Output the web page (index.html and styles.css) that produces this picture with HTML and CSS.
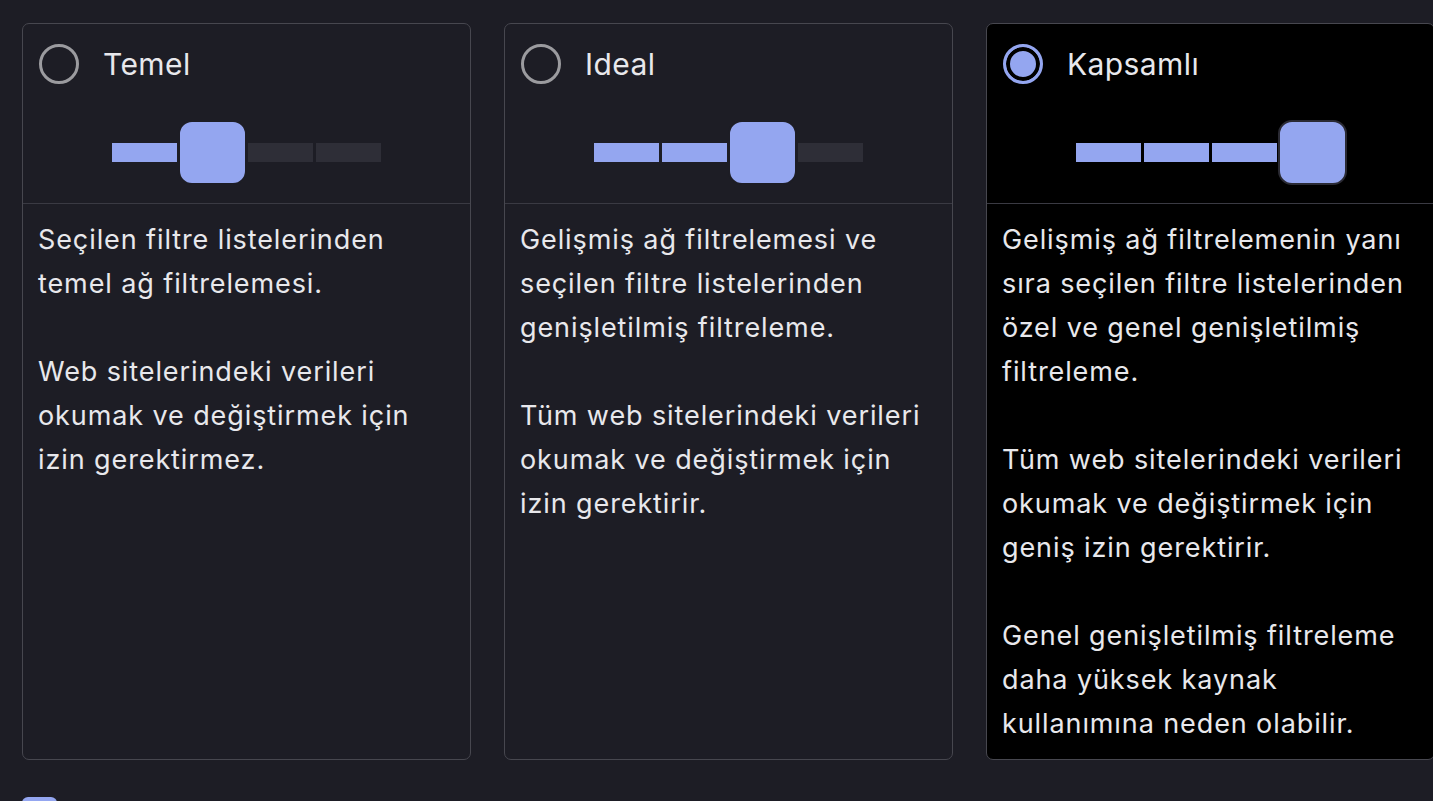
FILE: index.html
```html
<!DOCTYPE html>
<html lang="tr">
<head>
    <meta charset="UTF-8">
    <meta name="viewport" content="width=device-width, initial-scale=1.0">
    <title>Filtreleme modu</title>
    <link rel="stylesheet" href="styles.css">
</head>
<body>
    <main>
        <div class="levels">
            <label class="level">
                <div class="level-head">
                    <div class="level-title"><span class="radio"></span><span>Temel</span></div>
                    <div class="slider">
                        <span class="seg on"></span>
                        <span class="thumb"></span>
                        <span class="seg"></span>
                        <span class="seg"></span>
                    </div>
                </div>
                <div class="level-body">
                    <p>Seçilen filtre listelerinden temel ağ filtrelemesi.</p>
                    <p>Web sitelerindeki verileri okumak ve değiştirmek için izin gerektirmez.</p>
                </div>
            </label>
            <label class="level">
                <div class="level-head">
                    <div class="level-title"><span class="radio"></span><span>Ideal</span></div>
                    <div class="slider">
                        <span class="seg on"></span>
                        <span class="seg on"></span>
                        <span class="thumb"></span>
                        <span class="seg"></span>
                    </div>
                </div>
                <div class="level-body">
                    <p>Gelişmiş ağ filtrelemesi ve seçilen filtre listelerinden genişletilmiş filtreleme.</p>
                    <p>Tüm web sitelerindeki verileri okumak ve değiştirmek için izin gerektirir.</p>
                </div>
            </label>
            <label class="level selected">
                <div class="level-head">
                    <div class="level-title"><span class="radio"></span><span>Kapsamlı</span></div>
                    <div class="slider">
                        <span class="seg on"></span>
                        <span class="seg on"></span>
                        <span class="seg on"></span>
                        <span class="thumb"></span>
                    </div>
                </div>
                <div class="level-body">
                    <p>Gelişmiş ağ filtrelemenin yanı sıra seçilen filtre listelerinden özel ve genel genişletilmiş filtreleme.</p>
                    <p>Tüm web sitelerindeki verileri okumak ve değiştirmek için geniş izin gerektirir.</p>
                    <p>Genel genişletilmiş filtreleme daha yüksek kaynak kullanımına neden olabilir.</p>
                </div>
            </label>
        </div>
        <div class="option"><span class="checkbox"></span></div>
    </main>
</body>
</html>
```

FILE: styles.css
```css
* {
    box-sizing: border-box;
}
html, body {
    margin: 0;
}
body {
    font-family: Inter, "Noto Sans", sans-serif;
    background-color: #1d1d25;
    color: #e8e8ec;
    overflow: hidden;
    height: 801px;
}
main {
    padding: 23px 0 0 22px;
}
.levels {
    display: flex;
    gap: 33px;
    width: 1413px;
}
.level {
    flex: 0 0 449px;
    display: flex;
    flex-direction: column;
    height: 737px;
    border: 1px solid #47474f;
    border-radius: 7px;
    background-color: #1d1d25;
    cursor: pointer;
}
.level.selected {
    background-color: #000;
}
.level-head {
    padding: 20px 16px 19px;
    border-bottom: 1px solid #3a3a43;
}
.level-title {
    display: flex;
    align-items: center;
    gap: 24px;
    height: 40px;
    font-size: 30px;
    letter-spacing: 0.4px;
}
.radio {
    width: 40px;
    height: 40px;
    border: 3px solid #9b9b9f;
    border-radius: 50%;
}
.selected .radio {
    border-color: #94a6f0;
    background-color: #94a6f0;
    box-shadow: inset 0 0 0 4px #000;
}
.slider {
    display: flex;
    align-items: center;
    justify-content: center;
    gap: 3px;
    height: 63px;
    margin-top: 37px;
}
.seg {
    width: 65px;
    height: 19px;
    background-color: #2e2e37;
}
.seg.on {
    background-color: #94a6f0;
}
.thumb {
    width: 69px;
    height: 65px;
    margin: 0 -2px;
    border: 2px solid #1d1d25;
    border-radius: 14px;
    background-color: #94a6f0;
}
.selected .thumb {
    border-color: #2a2a33;
}
.level-body {
    padding: 14px 15px;
    font-size: 27px;
    line-height: 44px;
    letter-spacing: 0.9px;
}
.level-body p {
    margin: 0 0 44px;
}
.level-body p:last-child {
    margin-bottom: 0;
}
.option {
    padding-top: 37px;
}
.checkbox {
    display: block;
    width: 35px;
    height: 35px;
    border-radius: 6px;
    background-color: #94a6f0;
}
```
